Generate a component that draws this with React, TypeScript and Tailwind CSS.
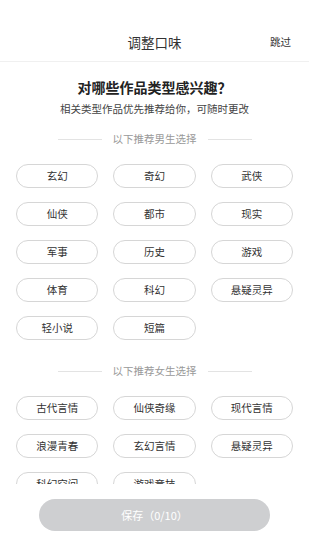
const male = ["玄幻", "奇幻", "武侠", "仙侠", "都市", "现实", "军事", "历史", "游戏", "体育", "科幻", "悬疑灵异", "轻小说", "短篇"];
const female = ["古代言情", "仙侠奇缘", "现代言情", "浪漫青春", "玄幻言情", "悬疑灵异", "科幻空间", "游戏竞技"];

function SectionLabel({ text }: { text: string }) {
  return (
    <div className="flex items-center justify-center gap-[11px]">
      <div className="h-px w-[44px] bg-[#e3e3e3]" />
      <span className="text-[10.5px] leading-4 text-[#999]">{text}</span>
      <div className="h-px w-[44px] bg-[#e3e3e3]" />
    </div>
  );
}

function ChipGrid({ items }: { items: string[] }) {
  return (
    <div className="grid grid-cols-3 gap-x-[15px] gap-y-[14px] px-4">
      {items.map((item, i) => (
        <div
          key={i}
          className="flex h-6 items-center justify-center rounded-full border border-[#d6d6d6] text-[10.5px] text-[#333]"
        >
          {item}
        </div>
      ))}
    </div>
  );
}

export default function App() {
  return (
    <div
      className="flex h-[550px] w-[309px] flex-col bg-white"
      style={{ fontFamily: '"Noto Sans CJK SC", "Noto Sans", sans-serif' }}
    >
      <div className="relative flex h-[62px] shrink-0 items-center justify-center border-b border-[#f0f0f0] pt-[22px]">
        <span className="text-[13.5px] leading-5 text-[#333]">调整口味</span>
        <span className="absolute right-[18px] top-[32px] text-[10.5px] leading-5 text-[#333]">跳过</span>
      </div>

      <div className="flex-1 overflow-hidden">
        <div className="pt-[15px] text-center">
          <div className="text-[14px] font-bold leading-5 text-[#222]">对哪些作品类型感兴趣？</div>
          <div className="mt-1 text-[10.5px] leading-4 text-[#444]">相关类型作品优先推荐给你，可随时更改</div>
        </div>
        <div className="mt-[14px]">
          <SectionLabel text="以下推荐男生选择" />
        </div>
        <div className="mt-[17px]">
          <ChipGrid items={male} />
        </div>
        <div className="mt-[23px]">
          <SectionLabel text="以下推荐女生选择" />
        </div>
        <div className="mt-[17px]">
          <ChipGrid items={female} />
        </div>
      </div>

      <div className="shrink-0 px-[39px] pb-[19px] pt-[15px]">
        <div className="flex h-8 items-center justify-center rounded-full bg-[#cecfd1] text-[11px] text-white">
          保存（0/10）
        </div>
      </div>
    </div>
  );
}
